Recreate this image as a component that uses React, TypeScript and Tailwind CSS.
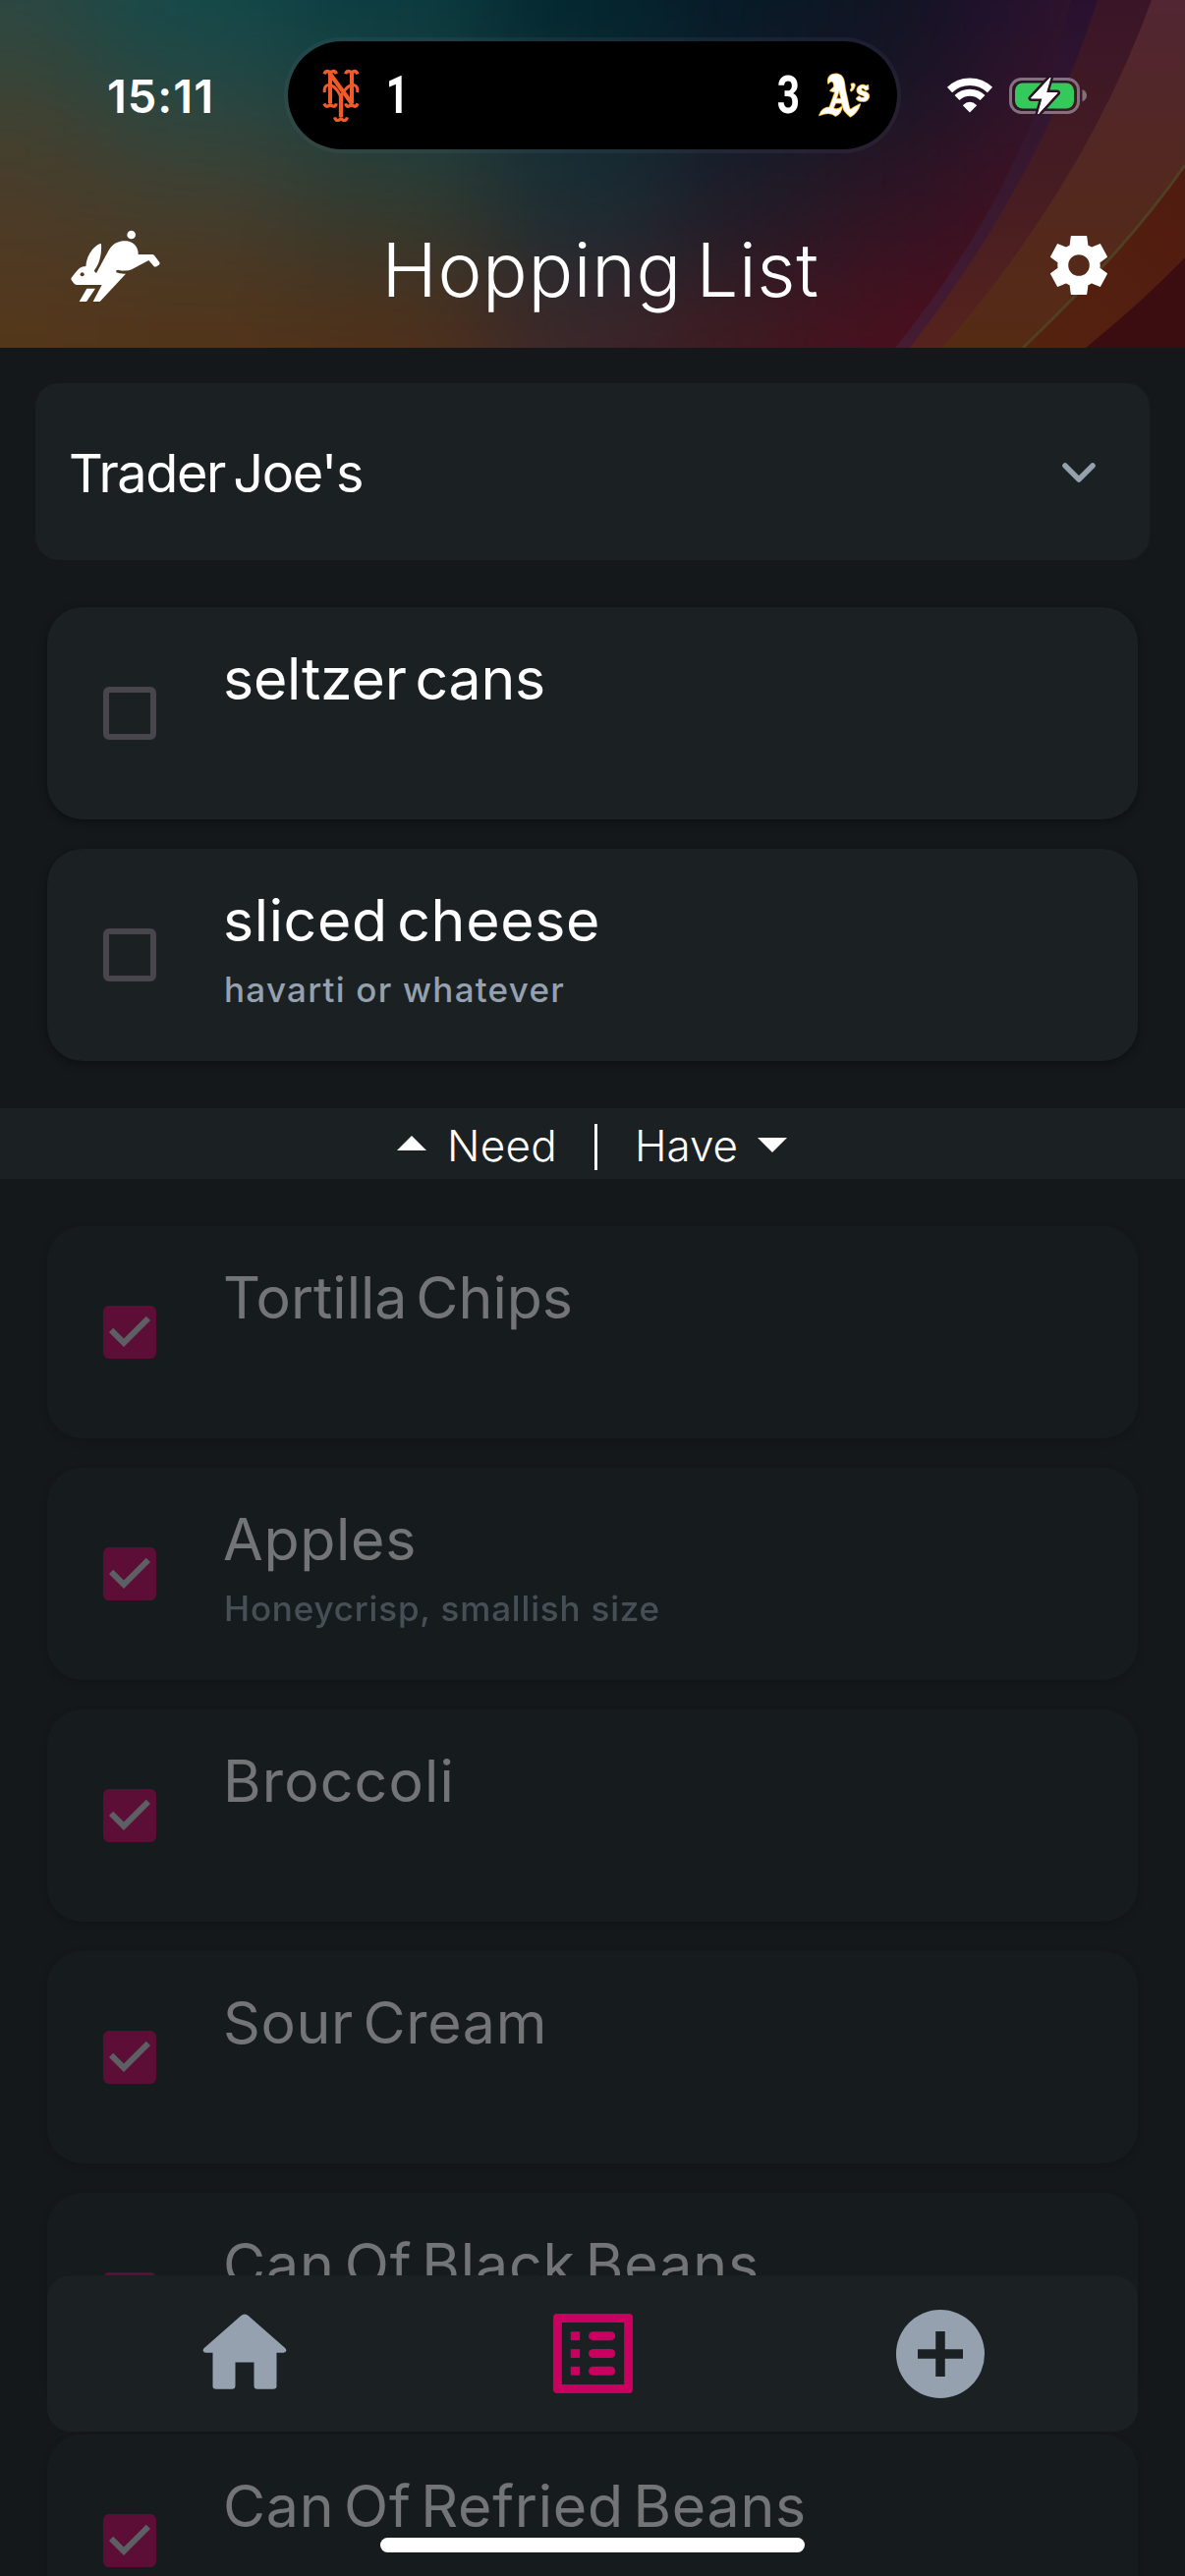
import { useLayoutEffect, useRef, useState } from "react";

type FitProps = { width: number; className?: string; children: string };

/* One line of text whose tracking is adjusted so that it spans the given width. */
function Fit({ width, className = "", children }: FitProps) {
  const ref = useRef<HTMLSpanElement>(null);
  const [spacing, setSpacing] = useState(0);
  useLayoutEffect(() => {
    if (ref.current) {
      const natural = ref.current.getBoundingClientRect().width;
      setSpacing((width - natural) / children.length);
    }
  }, []);
  return (
    <span ref={ref} className={"inline-block whitespace-pre " + className} style={{ letterSpacing: spacing + "px" }}>
      {children}
    </span>
  );
}

const MESH_X = [-180, 100, 300, 500, 680, 830, 980, 1130, 1390];
const MESH_Y = [-160, 70, 170, 280, 530];
const MESH = [
  ["#2c4842", "#14494a", "#0b3c40", "#02262e", "#071a27", "#101423", "#26112f", "#451c28"],
  ["#42412f", "#30463f", "#1f4140", "#132d34", "#131b28", "#1c1527", "#341328", "#451c22"],
  ["#4d3b27", "#463c2b", "#35392d", "#1c2c33", "#201c28", "#321423", "#420f20", "#451c22"],
  ["#54371a", "#523419", "#503019", "#3c262a", "#401a20", "#4a0f1e", "#4a0f1e", "#451c22"],
];

function HeaderArt() {
  return (
    <svg className="absolute inset-0" width="1206" height="354" viewBox="0 0 1206 354">
      <defs>
        <filter id="soft" x="-20%" y="-20%" width="140%" height="140%" colorInterpolationFilters="sRGB">
          <feGaussianBlur stdDeviation="56" />
        </filter>
        <linearGradient id="ray1" x1="0" y1="0" x2="0" y2="1">
          <stop offset="0" stopColor="#28112f" />
          <stop offset="0.5" stopColor="#38182f" />
          <stop offset="1" stopColor="#451c32" />
        </linearGradient>
        <linearGradient id="ray2" x1="0" y1="0" x2="0" y2="1">
          <stop offset="0" stopColor="#3a1528" />
          <stop offset="0.5" stopColor="#451c22" />
          <stop offset="1" stopColor="#56231d" />
        </linearGradient>
        <linearGradient id="ray3" x1="0" y1="0" x2="0" y2="1">
          <stop offset="0" stopColor="#522633" />
          <stop offset="0.5" stopColor="#522820" />
          <stop offset="1" stopColor="#562b14" />
        </linearGradient>
        <linearGradient id="ray4" x1="1" y1="0" x2="0" y2="1">
          <stop offset="0" stopColor="#501b10" />
          <stop offset="1" stopColor="#55220f" />
        </linearGradient>
      </defs>
      <g filter="url(#soft)">
        {MESH.map((row, r) =>
          row.map((fill, c) => (
            <rect key={r + "-" + c} x={MESH_X[c]} y={MESH_Y[r]} width={MESH_X[c + 1] - MESH_X[c] + 1} height={MESH_Y[r + 1] - MESH_Y[r] + 1} fill={fill} />
          )),
        )}
      </g>
      <path d="M1090 0Q1045 190 911 354H1206V0Z" fill="url(#ray1)" />
      <path d="M1117 0Q1060 180 926 354H1206V0Z" fill="url(#ray2)" />
      <path d="M1172 0Q1105 185 959 354H1206V0Z" fill="url(#ray3)" />
      <path d="M1206 168Q1145 255 1041 354H1206Z" fill="url(#ray4)" />
      <path d="M1206 168Q1145 255 1041 354" fill="none" stroke="#503f22" strokeWidth="3" />
      <path d="M1206 262Q1165 305 1105 354H1206Z" fill="#3b0c10" />
    </svg>
  );
}

function RabbitIcon() {
  return (
    <svg className="mt-[3px]" width="110" height="90" viewBox="0 0 330 270" fill="#fff">
      <circle cx="221" cy="39" r="13" />
      <path d="M129 66C131 92 126 126 107 149L114 156L152 86C166 62 188 56 207 58C229 61 243 78 242 99L286 99Q290 100 293 104L307 123Q309 127 305 131L298 136Q292 138 289 134L274 117L222 145Q205 152 180 146L175 148V154Q188 159 204 158L125 243H104L131 192H53Q48 191 45 187L38 177Q36 173 39 169Q54 148 64 140Q71 135 82 135Q84 105 104 82Q119 66 129 66Z" />
      <circle cx="71" cy="160" r="6" fill="#54371d" />
      <path d="M85 203H111L84 243H62Z" />
    </svg>
  );
}

function GearIcon() {
  return (
    <svg className="mt-[2px]" width="72" height="72" viewBox="0 0 24 24" fill="#fff" stroke="#fff" strokeWidth="0.5" strokeLinejoin="round">
      <path d="M9.5 21.75 9.1 18.6Q8.4 18.3 7.75 17.85L4.85 19.05 2.6 14.9 5.1 13Q4.95 12 5.1 11L2.6 9.1 4.85 4.95 7.75 6.15Q8.4 5.7 9.1 5.4L9.5 2.25H14.5L14.9 5.4Q15.6 5.7 16.25 6.15L19.15 4.95 21.4 9.1 18.9 11Q19.05 12 18.9 13L21.4 14.9 19.15 19.05 16.25 17.85Q15.6 18.3 14.9 18.6L14.5 21.75ZM12 15.85A3.85 3.85 0 0 0 12 8.15 3.85 3.85 0 0 0 12 15.85Z" fillRule="evenodd" />
    </svg>
  );
}

function MetsLogo() {
  return (
    <svg width="38" height="54" viewBox="0 0 114 162" fill="none" stroke="#f15a29" strokeWidth="12">
      <path d="M24 12V106M90 12V106" />
      <path d="M24 16L90 106" strokeWidth="13" />
      <path d="M6 16Q10 6 18 8L24 11L32 8Q40 6 43 16M71 16Q74 6 82 8L90 11L96 8Q104 6 108 16M6 106Q10 117 18 114L24 110L32 114Q40 117 43 106M71 106Q74 117 82 114L90 110L96 114Q104 117 108 106" strokeWidth="10" />
      <path d="M7 72C4 54 14 47 25 50C40 53 54 76 57 90C60 76 74 53 89 50C100 47 110 54 107 72" strokeWidth="9" />
      <path d="M57 82V148" strokeWidth="13" />
      <path d="M38 148Q41 160 50 157L57 153L64 157Q73 160 76 148" strokeWidth="10" />
    </svg>
  );
}

function AthleticsLogo() {
  return (
    <svg width="56" height="48" viewBox="0 0 168 144">
      <g stroke="#f2b229" strokeWidth="5" fill="#fff" strokeLinejoin="round" paintOrder="stroke">
        <path d="M36 36C31 14 47 5 63 7C83 10 85 30 87 52L100 112Q103 119 111 111L133 99Q124 127 103 137Q92 128 84 117L77 95H58L51 111Q62 120 77 107Q76 127 58 135Q42 119 9 133Q17 109 40 109L57 62L42 58L54 46Q53 28 46 29Q39 30 36 36ZM69 56L60 83H76Z" />
        <path d="M106 38Q113 33 117 40Q116 51 106 59L104 56Q109 50 108 46Z" />
        <path d="M158 53L150 56Q144 48 137 50Q134 57 143 60Q162 64 160 77Q155 92 139 90Q126 90 122 82L130 75Q138 83 147 79Q149 74 139 71Q122 67 124 53Q130 39 145 41L153 44L157 41Z" />
      </g>
    </svg>
  );
}

function WifiIcon() {
  return (
    <svg width="48" height="36" viewBox="0 0 48 36" fill="none" stroke="#fff">
      <path d="M3.5 12.5A29.5 29.5 0 0 1 44.5 12.5" strokeWidth="7.4" />
      <path d="M11 20.6A18.5 18.5 0 0 1 37 20.6" strokeWidth="7" />
      <path d="M24 35.5L16.8 28.2Q24 21.5 31.2 28.2Z" fill="#fff" stroke="none" />
    </svg>
  );
}

function BatteryIcon() {
  return (
    <svg width="80" height="40" viewBox="0 0 80 40">
      <rect x="1.5" y="3.5" width="69" height="34" rx="11" fill="none" stroke="#85707f" strokeWidth="3" />
      <rect x="6" y="7.5" width="60" height="26" rx="8" fill="#35c95b" />
      <path d="M74.5 14V26.5Q79 24 79 20.3T74.5 14Z" fill="#85707f" />
      <path d="M42 2L22.500 23H34L29.500 39L49 17.500H37.500Z" fill="#fff" stroke="#2c1426" strokeWidth="6" strokeLinejoin="round" paintOrder="stroke" />
      <path d="M42 2L22.500 23H34L29.500 39L49 17.500H37.500Z" fill="#fff" stroke="#fff" strokeWidth="1" strokeLinejoin="round" />
    </svg>
  );
}

type Item = { name: string; width: number; note?: string; noteWidth?: number };

const NEED: Item[] = [
  { name: "seltzer cans", width: 328 },
  { name: "sliced cheese", width: 384, note: "havarti or whatever", noteWidth: 347 },
];

const HAVE: Item[] = [
  { name: "Tortilla Chips", width: 356 },
  { name: "Apples", width: 197, note: "Honeycrisp, smallish size", noteWidth: 444 },
  { name: "Broccoli", width: 236 },
  { name: "Sour Cream", width: 330 },
  { name: "Can Of Black Beans", width: 546 },
  { name: "Can Of Refried Beans", width: 594 },
];

function ItemCard({ item, checked = false }: { item: Item; checked?: boolean }) {
  return (
    <div
      className={
        "flex h-[216px] shrink-0 rounded-[36px] bg-[#1b2023] pl-[57px] shadow-[0_3px_9px_rgba(0,0,0,0.35)] " +
        (checked ? "opacity-40" : "")
      }
    >
      {checked ? (
        <div className="mt-[81px] flex size-[54px] items-center justify-center rounded-md bg-[#ca0060]">
          <svg width="54" height="54" viewBox="3 3 18 18" fill="#c8cdd2">
            <path d="M10 17l-5-5 1.41-1.42L10 14.17l7.59-7.59L19 8z" />
          </svg>
        </div>
      ) : (
        <div className="mt-[81px] size-[54px] rounded-md border-6 border-[#49454d]" />
      )}
      <div className="ml-[68px] flex flex-col items-start pt-[37px]">
        <Fit width={item.width} className="text-[59px] leading-[72px] text-white [word-spacing:-0.13em]">
          {item.name}
        </Fit>
        {item.note && (
          <Fit width={item.noteWidth ?? 0} className="mt-[10px] ml-px text-[35px] leading-[48px] font-medium text-[#95a1af]">
            {item.note}
          </Fit>
        )}
      </div>
    </div>
  );
}

export default function App() {
  return (
    <div className="relative flex h-[2622px] w-[1206px] flex-col overflow-hidden bg-[#14181b] font-['Inter',sans-serif]">
      <header className="relative h-[354px] shrink-0 overflow-hidden">
        <HeaderArt />
        <div className="relative flex h-[194px] items-center pl-[109px]">
          <Fit width={109} className="mt-[2px] text-[47px] leading-[60px] font-semibold text-white">
            15:11
          </Fit>
          <div className="ml-[71px] flex h-[118px] w-[628px] items-center justify-between rounded-full border-4 border-[#8080a0]/10 bg-black bg-clip-padding pr-[26px] pl-[35px]">
            <div className="flex items-center">
              <MetsLogo />
              <span className="ml-[23px] inline-block origin-center scale-x-75 font-['Roboto',sans-serif] text-[54px] leading-[60px] font-bold text-white">1</span>
            </div>
            <div className="flex items-center">
              <span className="mr-[13px] inline-block origin-center scale-x-75 font-['Roboto',sans-serif] text-[54px] leading-[60px] font-bold text-white">3</span>
              <AthleticsLogo />
            </div>
          </div>
          <div className="ml-[46px] flex items-center gap-[16px]">
            <WifiIcon />
            <BatteryIcon />
          </div>
        </div>
        <div className="relative flex h-[150px] items-center justify-between pr-[72px] pl-[60px]">
          <RabbitIcon />
          <Fit width={445} className="mt-[10px] -ml-[10px] text-[76px] leading-[96px] font-light text-white [word-spacing:-0.1em]">
            Hopping List
          </Fit>
          <GearIcon />
        </div>
      </header>

      <div className="mx-[36px] mt-[36px] flex h-[180px] shrink-0 items-center justify-between rounded-[24px] bg-[#1b2023] pr-[54px] pl-[34px]">
        <Fit width={299} className="mt-[3px] text-[54px] leading-[72px] text-white [word-spacing:-0.1em]">
          Trader Joe's
        </Fit>
        <svg className="mt-[2px]" width="36" height="24" viewBox="0 0 36 24" fill="none" stroke="#95a1af" strokeWidth="5.5" strokeLinecap="round" strokeLinejoin="round">
          <path d="M4 5L18 19L32 5" />
        </svg>
      </div>

      <div className="mx-[48px] mt-[48px] flex shrink-0 flex-col gap-[30px]">
        {NEED.map((item) => (
          <ItemCard key={item.name} item={item} />
        ))}
      </div>

      <div className="mt-[48px] flex h-[72px] shrink-0 items-center bg-[#1b2023] pl-[404px] text-[44px] leading-[60px] font-light text-white">
        <svg className="-mt-[2px]" width="30" height="15" viewBox="0 0 30 15" fill="#fff">
          <path d="M0 15L15 0L30 15Z" />
        </svg>
        <Fit width={112} className="mt-[3px] ml-[21px]">
          Need
        </Fit>
        <div className="mt-[7px] ml-[38px] h-[47px] w-[3px] bg-white" />
        <Fit width={105} className="mt-[3px] ml-[38px]">
          Have
        </Fit>
        <svg className="mt-[2px] ml-[20px]" width="30" height="15" viewBox="0 0 30 15" fill="#fff">
          <path d="M0 0L15 15L30 0Z" />
        </svg>
      </div>

      <div className="mx-[48px] mt-[48px] flex shrink-0 flex-col gap-[30px]">
        {HAVE.map((item) => (
          <ItemCard key={item.name} item={item} checked />
        ))}
      </div>

      {/* Navigation floating over the list */}
      <nav className="absolute top-[2316px] left-[48px] grid h-[159px] w-[1110px] grid-cols-3 items-center justify-items-center rounded-[24px] bg-[#1b2023]">
        <svg className="ml-[32px]" width="90" height="90" viewBox="0 0 90 90" fill="#95a1af">
          <path d="M41 5.500Q45 1.500 49 5.500L86.500 43Q89 47 84.500 48H77.500V87Q77.500 90 74 90H58Q54.500 90 54.500 86V59H35.500V86Q35.500 90 32 90H16Q12.500 90 12.500 87V48H5.500Q1 47 3.500 43Z" transform="translate(0 1.5) scale(1 0.880)" />
        </svg>
        <svg width="81" height="81" viewBox="0 0 82 82" fill="#ca0060">
          <path d="M4 0H78Q82 0 82 4V78Q82 82 78 82H4Q0 82 0 78V4Q0 0 4 0ZM9 9V73H73V9Z" fillRule="evenodd" />
          {[18.5, 36.5, 54.5].map((y) => (
            <g key={y}>
              <rect x="18" y={y} width="9.500" height="9" />
              <rect x="36.500" y={y} width="27.500" height="9" rx="4.500" />
            </g>
          ))}
        </svg>
        <svg className="mr-[32px]" width="90" height="90" viewBox="0 0 90 90">
          <circle cx="45" cy="45" r="45" fill="#95a1af" />
          <path d="M45 22V68M22 45H68" stroke="#1b2023" strokeWidth="9.500" />
        </svg>
      </nav>
      <div className="absolute top-[2583px] left-[387px] h-[15px] w-[432px] rounded-full bg-white" />
    </div>
  );
}
